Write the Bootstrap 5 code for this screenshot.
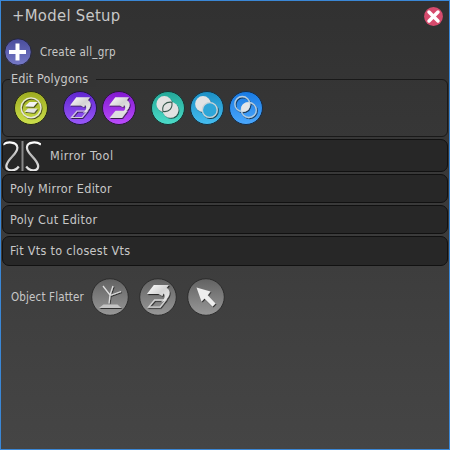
<!DOCTYPE html>
<html lang="en">
<head>
<meta charset="utf-8">
<meta name="viewport" content="width=device-width, initial-scale=1">
<title>Model Setup</title>
<link href="https://cdn.jsdelivr.net/npm/bootstrap@5.3.0/dist/css/bootstrap.min.css" rel="stylesheet">
<style>
body{background:#444;color:#c8c8c8;font-family:"DejaVu Sans Condensed","DejaVu Sans",sans-serif;font-stretch:condensed;font-size:12.5px;line-height:16px;letter-spacing:.3px}
.tool-window{width:450px;height:450px;border:1px solid #3a87d6;background:linear-gradient(#313131,#393939 42%,#404040 72%,#454545);padding:0 1px 0 1px}
.title-row{height:33px;padding:0 5px 3px 10px}
.title-text{font-size:16.5px;line-height:20px;letter-spacing:.3px}
.create-row{height:36px;padding-left:2px;gap:8px}
.small-label{font-size:11.5px;letter-spacing:.26px}
.flat-row .small-label{letter-spacing:.15px}
.poly-group{height:58px;margin-top:9px;border:1px solid #191919;border-radius:6px;padding:0 0 0 11px}
.poly-legend{float:none;width:auto;font-size:12.5px;font-weight:400;line-height:16px;height:16px;margin:-9px 0 0 -4px;padding:0 8px 0 1px;background:#343434;letter-spacing:.14px}
.poly-icons{height:34px;margin-top:4px}
.fold-panel{border:1px solid #111;border-radius:7px;background:#272727;padding-left:7px;margin-top:2px;height:29px}
.fold-last{height:30px}
.fold-mirror{height:33px;padding-left:0;gap:9px;overflow:hidden;letter-spacing:.48px}
.flat-row{margin-top:12px;height:38px;padding-left:9px}
svg{display:block;flex:none}
button.icon-btn{border:0;padding:0;background:none}
.gap-s{margin-left:5px}
.gap-m{margin-left:10px}
.gap-l{margin-left:15px}
.flat-end{margin-right:223px}
</style>
<script src="https://cdn.jsdelivr.net/npm/bootstrap@5.3.0/dist/js/bootstrap.bundle.min.js"></script>
</head>
<body>
<svg width="0" height="0" class="position-absolute">
<defs>
<linearGradient id="gPlus" x2="0" y2="1"><stop stop-color="#494c9b"/><stop offset="1" stop-color="#767ac8"/></linearGradient>
<linearGradient id="gLime" x2="0" y2="1"><stop stop-color="#9dab1f"/><stop offset="1" stop-color="#cce04c"/></linearGradient>
<linearGradient id="gViolet" x2="0" y2="1"><stop stop-color="#5f25cf"/><stop offset="1" stop-color="#9a58fa"/></linearGradient>
<linearGradient id="gPurple" x2="0" y2="1"><stop stop-color="#8118cf"/><stop offset="1" stop-color="#bb4cfc"/></linearGradient>
<linearGradient id="gTeal" x2="0" y2="1"><stop stop-color="#23a898"/><stop offset="1" stop-color="#4ddcc9"/></linearGradient>
<linearGradient id="gCyan" x2="0" y2="1"><stop stop-color="#1b8fc4"/><stop offset="1" stop-color="#46bdf0"/></linearGradient>
<linearGradient id="gBlue" x2="0" y2="1"><stop stop-color="#1879e2"/><stop offset="1" stop-color="#4ba8fd"/></linearGradient>
<linearGradient id="gGray" x2="0" y2="1"><stop stop-color="#626262"/><stop offset="1" stop-color="#989898"/></linearGradient>
<linearGradient id="gMetal" x2="1" y2="1"><stop stop-color="#fff"/><stop offset=".5" stop-color="#d4d4d4"/><stop offset="1" stop-color="#f1f1f1"/></linearGradient>
<linearGradient id="gSteel" x2="0" y2="1"><stop stop-color="#fff"/><stop offset=".5" stop-color="#b8b8b8"/><stop offset="1" stop-color="#e8e8e8"/></linearGradient>
<filter id="shade" x="-20%" y="-20%" width="150%" height="150%"><feDropShadow dx=".8" dy="1" stdDeviation=".5" flood-color="#111" flood-opacity=".75"/></filter>
<path id="flipTop" fill="url(#gMetal)" d="M7 14.500 13.300 6.300H27L24.800 9.200c2.500 1 3.400 3.400 2.500 6.200-.9 3-3.600 5.500-7.300 6.600 2.300-1.900 3.500-4.300 3.200-6.100-.1-.9-.6-1.500-1.200-1.800l-.9 2.200-3.300-1.800z"/>
</defs>
</svg>
<main class="tool-window d-flex flex-column">
  <header class="title-row d-flex align-items-center justify-content-between">
    <span class="title-text">+Model Setup</span>
    <button class="icon-btn" aria-label="Close"><svg width="20" height="20" viewBox="0 0 20 20"><circle cx="10.500" cy="10.500" r="9.400" fill="#d64b6d"/><path d="M6 6 15 15M15 6 6 15" stroke="#fff" stroke-width="3.500" stroke-linecap="round"/></svg></button>
  </header>
  <div class="create-row d-flex align-items-center">
    <svg width="28" height="28" viewBox="0 0 28 28"><circle cx="14" cy="14" r="13.300" fill="url(#gPlus)" stroke="#25263c"/><path d="M13.500 5.500v17M5 14h17" stroke="#fff" stroke-width="4"/></svg>
    <span class="small-label">Create all_grp</span>
  </div>
  <section class="poly-group d-flex flex-column align-items-start">
    <h2 class="poly-legend">Edit Polygons</h2>
    <div class="poly-icons d-flex align-items-center">
      <svg width="34" height="34" viewBox="0 0 34 34"><circle cx="17" cy="17" r="16.500" fill="url(#gLime)" stroke="#252918"/><g filter="url(#shade)"><circle cx="17" cy="16.800" r="9.900" fill="none" stroke="#e9e9dc" stroke-width="1.300"/><path d="M10.500 20.800 14 17.500h9.500l-3.400 4.200z" fill="#e3e3e3"/><path d="M11 15.300 15.500 11h8l-4 4.800z" fill="#f3f3f3"/></g></svg>
      <svg class="gap-l" width="34" height="34" viewBox="0 0 34 34"><circle cx="17" cy="17" r="16.500" fill="url(#gViolet)" stroke="#21183a"/><g filter="url(#shade)"><path d="M8.500 26.500 14 20h10.200L19 26.500z" fill="none" stroke="#cfc8dd" stroke-width="1.200"/><use href="#flipTop"/></g></svg>
      <svg class="gap-s" width="34" height="34" viewBox="0 0 34 34"><circle cx="17" cy="17" r="16.500" fill="url(#gPurple)" stroke="#2a1738"/><g filter="url(#shade)"><path d="m7.500 27 6-7.300h12L20 27z" fill="#dedede"/><use href="#flipTop"/></g></svg>
      <svg class="gap-l" width="34" height="34" viewBox="0 0 34 34"><circle cx="17" cy="17" r="16.500" fill="url(#gTeal)" stroke="#173431"/><g filter="url(#shade)"><circle cx="13.300" cy="13" r="7.900" fill="#e2e2e2"/><circle cx="19.500" cy="18.800" r="7.900" fill="#e2e2e2"/></g><path d="M12 20.500C10.500 14.500 14.700 10.500 20.800 11.200 22 17 18.300 21.500 12 20.500" fill="none" stroke="#38594e" stroke-width="1.100"/></svg>
      <svg class="gap-s" width="34" height="34" viewBox="0 0 34 34"><circle cx="17" cy="17" r="16.500" fill="url(#gCyan)" stroke="#163140"/><g filter="url(#shade)"><circle cx="13" cy="13" r="7.900" fill="#e0e3e4"/><circle cx="19.800" cy="19" r="7.400" fill="#2fa6d8" stroke="#c9d4d8" stroke-width="1.300"/></g></svg>
      <svg class="gap-s" width="34" height="34" viewBox="0 0 34 34"><circle cx="17" cy="17" r="16.500" fill="url(#gBlue)" stroke="#162c46"/><g filter="url(#shade)" fill="none" stroke="#b4ccdf" stroke-width="1.300"><circle cx="13.300" cy="13" r="7.500"/><circle cx="19.800" cy="19" r="7.500"/><path d="M12.500 20.500C11 14.500 14.500 10.700 20.500 11.500 21.800 17.600 18.600 21.300 12.500 20.500z" fill="#e3e5e7" stroke="none"/></g></svg>
    </div>
  </section>
  <div class="fold-panel fold-mirror d-flex align-items-center">
    <svg width="38" height="31" viewBox="0 0 38 31" fill="none"><path d="M19.500 1v30" stroke="#878787" stroke-width="2"/><g stroke="url(#gSteel)" stroke-width="2.200"><path d="M0 4.500C4 1.500 13.500 1.500 14.300 7 15.500 14 4.500 18 3.300 26c0 5.500 8.500 6 12.500.5"/><path d="M38 4.500C34 1.500 24.500 1.500 24 7c-.8 7 10.200 11 11.200 19 0 5.500-8 6-12 .5"/></g></svg>
    <span>Mirror Tool</span>
  </div>
  <div class="fold-panel d-flex align-items-center">Poly Mirror Editor</div>
  <div class="fold-panel d-flex align-items-center">Poly Cut Editor</div>
  <div class="fold-panel fold-last d-flex align-items-center">Fit Vts to closest Vts</div>
  <div class="flat-row d-flex align-items-center">
    <span class="small-label">Object Flatter</span>
    <svg class="ms-auto" width="38" height="38" viewBox="0 0 38 38"><circle cx="19" cy="19" r="18.300" fill="url(#gGray)" stroke="#2c2c2c"/><g filter="url(#shade)" stroke="#dedede" stroke-width="1.300"><path d="M18 25.500 19 17 12 8M19 17l3-9M19 17.500l11-4" fill="none"/><path d="m8 30 4.500-3.500h14l4 3.500z" fill="#c4c4c4" stroke="none"/></g></svg>
    <svg class="gap-m" width="38" height="38" viewBox="0 0 38 38"><circle cx="19" cy="19" r="18.300" fill="url(#gGray)" stroke="#2c2c2c"/><g transform="translate(.2 0) scale(1.100)" filter="url(#shade)"><path d="M8.500 26.500 14 20h10.200L19 26.500z" fill="none" stroke="#d4d4d4" stroke-width="1.200"/><use href="#flipTop"/></g></svg>
    <svg class="gap-m flat-end" width="38" height="38" viewBox="0 0 38 38"><circle cx="19" cy="19" r="18.300" fill="url(#gGray)" stroke="#2c2c2c"/><path d="M9.500 9.500 23.500 13.500 20.700 17.300 28.500 25.500 25.500 28.500 17.500 20.500 14.500 23.500z" fill="#eee" filter="url(#shade)"/></svg>
  </div>
</main>
</body>
</html>
